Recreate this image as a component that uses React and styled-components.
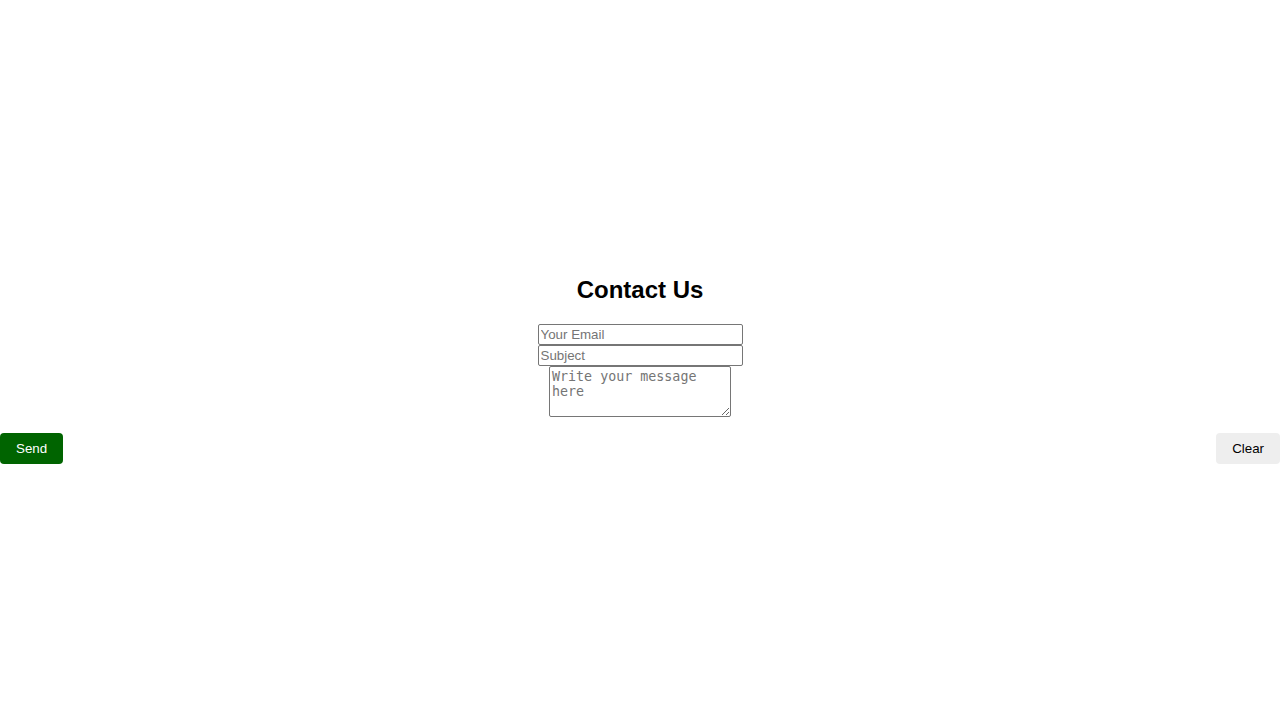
import React from "react";
import styled, { createGlobalStyle } from "styled-components";

const Global = createGlobalStyle`
  html, body { margin: 0; padding: 0; background: #fff; }
  body { font-family: "Liberation Sans", Arial, sans-serif; }
`;

const Page = styled.div`
  min-height: 100vh;
  display: flex;
  flex-direction: column;
  justify-content: center;
`;

const Title = styled.h2`
  font-family: "Liberation Sans", Arial, sans-serif;
  font-size: 24px;
  font-weight: bold;
  line-height: 28px;
  margin: 19.92px 0;
  text-align: center;
  color: #000;
`;

const Fields = styled.div`
  display: flex;
  flex-direction: column;
  align-items: center;
`;

const Input = styled.input`
  box-sizing: border-box;
  width: 205px;
  height: 21px;
  margin: 0;
  padding: 1px 2px;
  border: 1px solid #767676;
  border-radius: 2px;
  font-family: "Liberation Sans", Arial, sans-serif;
  font-size: 13.333px;
  color: #000;
  &::placeholder { color: #757575; }
`;

const TextArea = styled.textarea`
  box-sizing: border-box;
  width: 182px;
  height: 51px;
  margin: 0;
  padding: 2px;
  border: 1px solid #767676;
  border-radius: 2px;
  font-family: "DejaVu Sans Mono", "Liberation Mono", monospace;
  font-size: 13.333px;
  line-height: 15px;
  color: #000;
  &::placeholder { color: #757575; }
`;

const Actions = styled.div`
  display: flex;
  justify-content: space-between;
  margin-top: 16px;
`;

const Button = styled.button`
  box-sizing: border-box;
  height: 31px;
  padding: 0 16px;
  border: none;
  border-radius: 4px;
  font-family: "Liberation Sans", Arial, sans-serif;
  font-size: 13.333px;
  cursor: pointer;
  background: ${(p) => (p.$primary ? "#006400" : "#eeeeee")};
  color: ${(p) => (p.$primary ? "#ffffff" : "#000000")};
`;

export default function App() {
  return (
    <>
      <Global />
      <Page>
        <Title>Contact Us</Title>
        <Fields>
          <Input type="email" placeholder="Your Email" />
          <Input type="text" placeholder="Subject" />
          <TextArea rows={3} placeholder="Write your message here" />
        </Fields>
        <Actions>
          <Button $primary>Send</Button>
          <Button>Clear</Button>
        </Actions>
      </Page>
    </>
  );
}
